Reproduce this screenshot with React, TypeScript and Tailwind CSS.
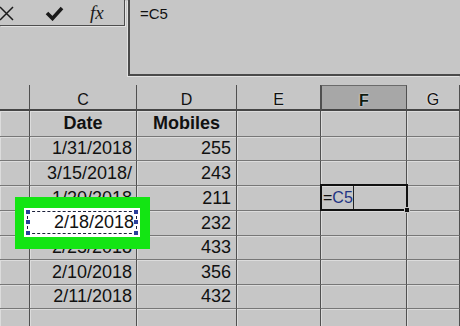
import React from "react";

const FONT = { fontFamily: '"Liberation Sans", Arial, sans-serif' };

const cols = ["w-[30px]", "w-[107px]", "w-[100px]", "w-[84px]", "w-[86px]", "w-[53px]"];

type CellProps = { i: number; h: string; children?: React.ReactNode; extra?: string };

function Cell({ i, h, children, extra = "" }: CellProps) {
  return (
    <div
      className={`${cols[i]} ${h} shrink-0 relative flex items-center border-r border-b border-r-[#505050] border-b-[#777777] shadow-[inset_1px_1px_0_#dcdcdc] ${extra}`}
    >
      {children}
    </div>
  );
}

type RowData = { h: string; date: string; num: string; edit?: boolean };

const rows: RowData[] = [
  { h: "h-[24px]", date: "1/31/2018", num: "255" },
  { h: "h-[25px]", date: "3/15/2018/", num: "243" },
  { h: "h-[25px]", date: "1/20/2018", num: "211", edit: true },
  { h: "h-[25px]", date: "2/18/2018", num: "232" },
  { h: "h-[24px]", date: "2/25/2018", num: "433" },
  { h: "h-[25px]", date: "2/10/2018", num: "356" },
  { h: "h-[24px]", date: "2/11/2018", num: "432" },
  { h: "h-[25px]", date: "", num: "" },
];

export default function App() {
  return (
    <div
      className="relative w-[460px] h-[326px] overflow-hidden bg-[#c6c6c6] text-[#111]"
      style={FONT}
    >
      {/* Formula bar area */}
      <div className="flex h-[85px]">
        <div className="w-[125px] h-[26px] border-r border-b border-[#4e4e4e] shadow-[1px_1px_0_#e2e2e2] flex items-center shrink-0">
          <svg width="16" height="16" viewBox="0 0 16 16" className="ml-[-1px] mt-[1px]">
            <path d="M1 2 L14 15 M14 2 L1 15" stroke="#1a1a1a" strokeWidth="1.5" fill="none" />
          </svg>
          <svg width="19" height="16" viewBox="0 0 19 16" className="ml-[30px] mt-[1px]">
            <path d="M2 8 L7.5 13.5 L17 3" stroke="#1a1a1a" strokeWidth="3.6" fill="none" strokeLinejoin="miter" />
          </svg>
          <span
            className="ml-[26px] text-[19px] italic leading-none text-[#1a1a1a]"
            style={{ fontFamily: '"Liberation Serif", "Times New Roman", serif' }}
          >
            fx
          </span>
        </div>
        <div className="w-[3px] shrink-0" />
        <div className="flex-1 h-[76px] border-l-2 border-b-2 border-[#4a4a4a] shadow-[-1px_1px_0_#e2e2e2] pl-[10px] pt-[3px] text-[15px]">
          =C5
        </div>
      </div>

      {/* Column headers */}
      <div className="flex">
        {["", "C", "D", "E", "F", "G"].map((l, i) => (
          <div
            key={i}
            className={`${cols[i]} h-[26px] shrink-0 flex items-start justify-center pt-[3px] text-[16px] border-r border-r-[#505050] border-b-2 border-b-[#454545] ${
              i === 4 ? "bg-[#a7a7a7] font-bold text-[#0e1a0e] border-l border-l-[#505050] border-t border-t-[#6a6a6a]" : ""
            }`}
            style={i >= 3 ? { textShadow: "0 0 2px #fff" } : undefined}
          >
            {l}
          </div>
        ))}
      </div>

      {/* Title row */}
      <div className="flex">
        <Cell i={0} h="h-[26px]" />
        <Cell i={1} h="h-[26px]" extra="justify-center font-bold text-[18px]">
          Date
        </Cell>
        <Cell i={2} h="h-[26px]" extra="justify-center font-bold text-[18px]">
          Mobiles
        </Cell>
        <Cell i={3} h="h-[26px]" />
        <Cell i={4} h="h-[26px]" />
        <Cell i={5} h="h-[26px]" />
      </div>

      {rows.map((r, k) => (
        <div className="flex" key={k}>
          <Cell i={0} h={r.h} />
          <Cell i={1} h={r.h} extra="justify-end pr-[4px] text-[18px]">
            {r.date}
          </Cell>
          <Cell i={2} h={r.h} extra="justify-end pr-[5px] text-[18px]">
            {r.num}
          </Cell>
          <Cell i={3} h={r.h} />
          <Cell i={4} h={r.h}>
            {r.edit && (
              <div className="absolute left-[-1px] top-[-2px] w-[88px] h-[27px] border-2 border-[#111] flex z-10">
                <div className="w-[32px] h-full border-r border-[#222] flex items-center pl-[1px] text-[16px]">
                  <span>=</span>
                  <span className="text-[#1f3484]">C5</span>
                </div>
                <div className="absolute right-[-4px] bottom-[-4px] w-[6px] h-[6px] bg-[#111] border border-[#c6c6c6]" />
              </div>
            )}
          </Cell>
          <Cell i={5} h={r.h} />
        </div>
      ))}

      {/* Green highlight over C5 */}
      <div className="absolute left-[15px] top-[197px] w-[135px] h-[52px] bg-[#13e513]">
        <div className="absolute left-[9px] top-[11px] w-[116px] h-[29px] bg-white">
          <div className="absolute inset-[3px] border-[1.5px] border-dashed border-[#1b1f3a]" />
          <div className="absolute inset-0 flex items-center justify-end pr-[6px] text-[18px]">2/18/2018</div>
          {[
            "left-[2px] top-[2px]",
            "right-[2px] top-[2px]",
            "left-[2px] bottom-[2px]",
            "right-[2px] bottom-[2px]",
            "left-[2px] top-[12px]",
            "right-[2px] top-[12px]",
          ].map((p, j) => (
            <div key={j} className={`absolute ${p} w-[4px] h-[4px] bg-[#2a3f9a]`} />
          ))}
        </div>
      </div>
    </div>
  );
}
